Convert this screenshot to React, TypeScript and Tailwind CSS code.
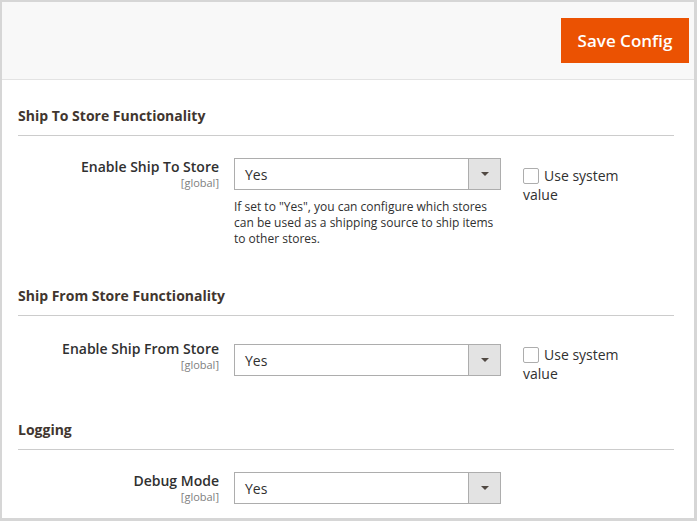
import { ReactNode } from "react";

function SelectBox({ value }: { value: string }) {
  return (
    <div className="flex h-[32px] w-[267px] border border-[#adadad] bg-white">
      <div className="flex flex-1 items-center pl-[10px] text-[14px] text-[#303030]">{value}</div>
      <div className="flex w-[32px] items-center justify-center border-l border-[#adadad] bg-[#e3e3e3]">
        <span className="block h-0 w-0 border-x-[4px] border-t-[4px] border-x-transparent border-t-[#514943]" />
      </div>
    </div>
  );
}

function UseSystem({ className }: { className: string }) {
  return (
    <div className={`ml-[22px] w-[108px] text-[14px] leading-[19px] text-[#303030] ${className}`}>
      <span className="mr-[5px] inline-block h-[16px] w-[16px] rounded-[2px] border border-[#adadad] bg-white align-[-3px]" />
      Use system value
    </div>
  );
}

function Row({
  label,
  className,
  selectClass = "",
  checkClass = "",
  showCheck = true,
  children,
}: {
  label: string;
  className: string;
  selectClass?: string;
  checkClass?: string;
  showCheck?: boolean;
  children?: ReactNode;
}) {
  return (
    <div className={`flex items-start ${className}`}>
      <div className="w-[201px] text-right">
        <div className="text-[14px] font-semibold leading-[18px] text-[#303030]">{label}</div>
        <div className="text-[11px] leading-[13px] text-[#808080]">[global]</div>
      </div>
      <div className={`ml-[15px] w-[267px] ${selectClass}`}>
        <SelectBox value="Yes" />
        {children}
      </div>
      {showCheck && <UseSystem className={checkClass} />}
    </div>
  );
}

function SectionTitle({ title, className }: { title: string; className: string }) {
  return (
    <div className={`border-b border-[#cccccc] pb-[9px] text-[14px] font-bold leading-[20px] text-[#41362f] ${className}`}>
      {title}
    </div>
  );
}

export default function App() {
  return (
    <div className="h-[521px] w-[697px] overflow-hidden border-t-2 border-l-2 border-r-[3px] border-b-[3px] border-[#d6d6d6] bg-white font-['Open_Sans',sans-serif]">
      {/* page actions */}
      <div className="flex h-[78px] items-start justify-end border-b border-[#e3e3e3] bg-[#f8f8f8] pt-4 pr-[5px]">
        <button className="h-[45px] w-[128px] bg-[#eb5202] text-[17px] font-semibold text-white">
          Save Config
        </button>
      </div>

      <div className="pl-4 pr-5">
        <SectionTitle title="Ship To Store Functionality" className="mt-[26px]" />
        <Row label="Enable Ship To Store" className="mt-[22px]" checkClass="pt-[8px]">
          <p className="mt-[9px] text-[12px] leading-[16px] text-[#303030]">
            If set to "Yes", you can configure which stores can be used as a shipping source to ship items to
            other stores.
          </p>
        </Row>

        <SectionTitle title="Ship From Store Functionality" className="mt-[39px]" />
        <Row label="Enable Ship From Store" className="mt-[24px]" selectClass="mt-[4px]" checkClass="pt-[5px]" />

        <SectionTitle title="Logging" className="mt-[37px]" />
        <Row label="Debug Mode" className="mt-[22px]" showCheck={false} />
      </div>
    </div>
  );
}
